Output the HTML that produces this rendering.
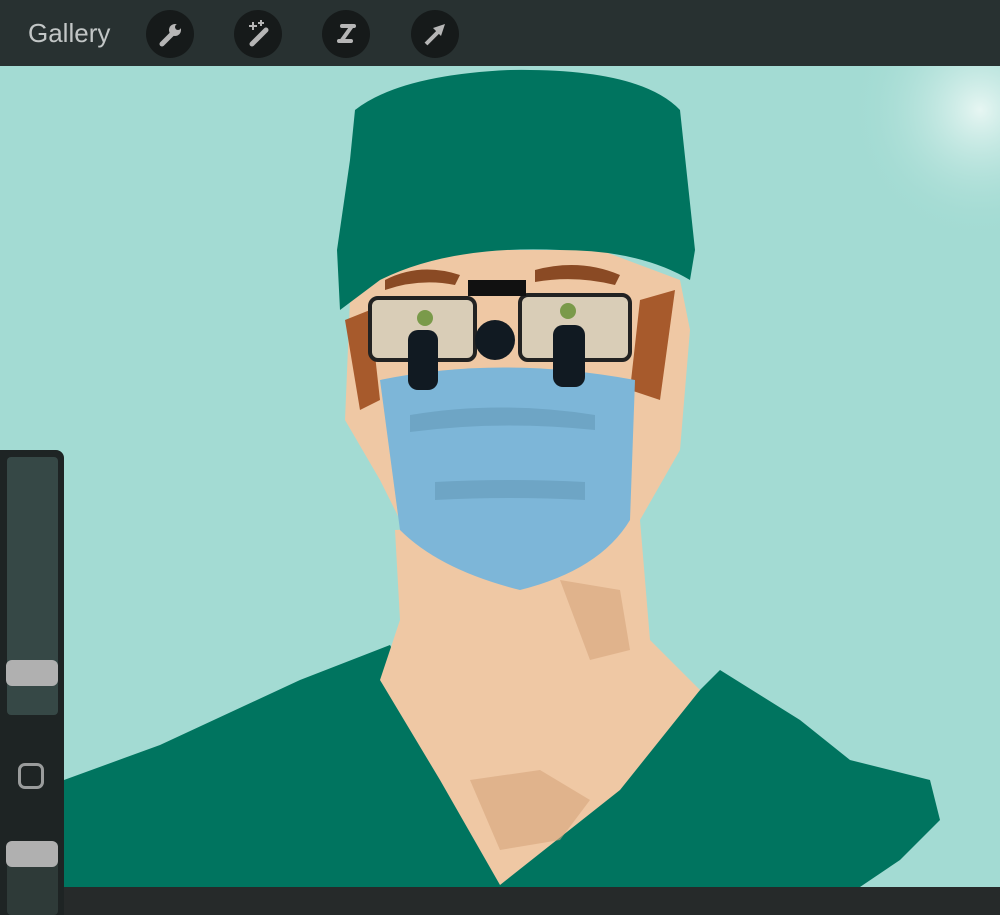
<!DOCTYPE html>
<html><head><meta charset="utf-8"><style>
html,body{margin:0;padding:0;width:1000px;height:915px;overflow:hidden;background:#a3dbd3;font-family:"Liberation Sans",sans-serif}
.top{position:absolute;left:0;top:0;width:1000px;height:66px;background:#283131}
.gal{position:absolute;left:28px;top:18px;color:#c2c6c6;font-size:26px}
.btn{position:absolute;top:10px;width:48px;height:48px;border-radius:50%;background:#161a1a}
.btn svg{position:absolute;left:0;top:0}
.side{position:absolute;left:0;top:450px;width:64px;height:465px;background:#1e2424;border-radius:0 8px 0 0}
.tr{position:absolute;left:7px;top:457px;width:51px;height:258px;background:#364846;border-radius:4px}
.h1{position:absolute;left:6px;top:660px;width:52px;height:26px;background:#b0b0b0;border-radius:6px}
.sq{position:absolute;left:18px;top:763px;width:26px;height:26px;border:3px solid #9a9c9c;border-radius:7px;box-sizing:border-box}
.tr2{position:absolute;left:7px;top:842px;width:51px;height:73px;background:#2e3a38;border-radius:4px}
.h2{position:absolute;left:6px;top:841px;width:52px;height:26px;background:#b0b0b0;border-radius:6px}
.bot{position:absolute;left:64px;top:887px;width:936px;height:28px;background:#262a2a}
</style></head><body>
<svg style="position:absolute;left:0;top:0" width="1000" height="915">
<defs><radialGradient id="w" cx="980" cy="110" r="130" gradientUnits="userSpaceOnUse"><stop offset="0" stop-color="#eef9f6" stop-opacity=".9"/><stop offset="1" stop-color="#a3dbd3" stop-opacity="0"/></radialGradient></defs>
<rect x="800" y="60" width="200" height="220" fill="url(#w)"/>
<path d="M64 780 L160 745 L300 680 L390 645 L430 720 L500 880 L600 790 L700 690 L720 670 L800 720 L850 760 L930 780 L940 820 L900 860 L860 887 L64 887 Z" fill="#00745f"/>
<path d="M395 530 L640 520 L650 640 L700 690 L620 790 L500 885 L440 780 L380 680 L400 620 Z" fill="#efc8a4"/>
<path d="M470 780 L540 770 L590 800 L560 840 L500 850 Z" fill="#d6a57d" opacity=".6"/>
<path d="M560 580 L620 590 L630 650 L590 660 Z" fill="#d6a57d" opacity=".6"/>
<path d="M350 300 L365 260 L430 250 L600 250 L680 280 L690 330 L680 450 L640 520 L600 560 L420 560 L380 480 L345 420 Z" fill="#efc8a4"/>
<path d="M345 320 L370 310 L380 400 L360 410 Z" fill="#a75a2c"/>
<path d="M640 300 L675 290 L660 400 L630 390 Z" fill="#a75a2c"/>
<path d="M385 280 Q420 262 460 275 L455 285 Q420 278 385 290Z" fill="#8a4a24"/>
<path d="M535 270 Q580 258 620 275 L615 285 Q575 275 535 282Z" fill="#8a4a24"/>
<rect x="370" y="298" width="105" height="62" rx="8" fill="#d9cdb7" stroke="#222" stroke-width="4"/>
<rect x="520" y="295" width="110" height="65" rx="8" fill="#d9cdb7" stroke="#222" stroke-width="4"/>
<circle cx="425" cy="318" r="8" fill="#7a9a4a"/><circle cx="568" cy="311" r="8" fill="#7a9a4a"/>
<rect x="468" y="280" width="58" height="16" fill="#111"/>
<path d="M380 380 Q500 355 635 380 L630 520 Q600 570 520 590 Q440 570 400 530 Z" fill="#7db6d8"/>
<path d="M410 415 Q500 400 595 415 L595 430 Q500 420 410 432Z" fill="#6ea5c5"/>
<path d="M435 482 Q510 478 585 482 L585 500 Q510 496 435 500Z" fill="#6ea5c5"/>
<rect x="408" y="330" width="30" height="60" rx="10" fill="#111a22"/>
<rect x="553" y="325" width="32" height="62" rx="10" fill="#111a22"/>
<circle cx="495" cy="340" r="20" fill="#111a22"/>
<path d="M355 110 Q400 75 510 70 Q640 68 680 110 L695 250 L690 280 Q640 250 560 250 Q450 245 380 280 L340 310 L337 250 L350 160 Z" fill="#00745f"/>
</svg>
<div class="top"></div>
<div class="gal">Gallery</div>
<div class="btn" style="left:146px"><svg width="48" height="48"><path d="M16 34 L26 24" stroke="#b6b6b6" stroke-width="5" stroke-linecap="round"/><circle cx="29" cy="20" r="6" fill="#b6b6b6"/><circle cx="32" cy="17" r="3" fill="#161a1a"/></svg></div>
<div class="btn" style="left:234px"><svg width="48" height="48"><path d="M18 34 L32 20" stroke="#b6b6b6" stroke-width="5" stroke-linecap="round"/><path d="M19 12v8M15 16h8M27 10v6M24 13h6" stroke="#b6b6b6" stroke-width="2"/></svg></div>
<div class="btn" style="left:322px"><svg width="48" height="48"><path d="M20 16h12M30 16 L20 30M17 31h12" stroke="#b6b6b6" stroke-width="4" fill="none" stroke-linecap="round"/></svg></div>
<div class="btn" style="left:411px"><svg width="48" height="48"><path d="M15 34 L30 19" stroke="#b6b6b6" stroke-width="4"/><path d="M34 14 L22 18 L30 26 Z" fill="#b6b6b6"/></svg></div>
<div class="side"></div><div class="tr"></div><div class="h1"></div><div class="sq"></div><div class="tr2"></div><div class="h2"></div>
<div class="bot"></div>
</body></html>
